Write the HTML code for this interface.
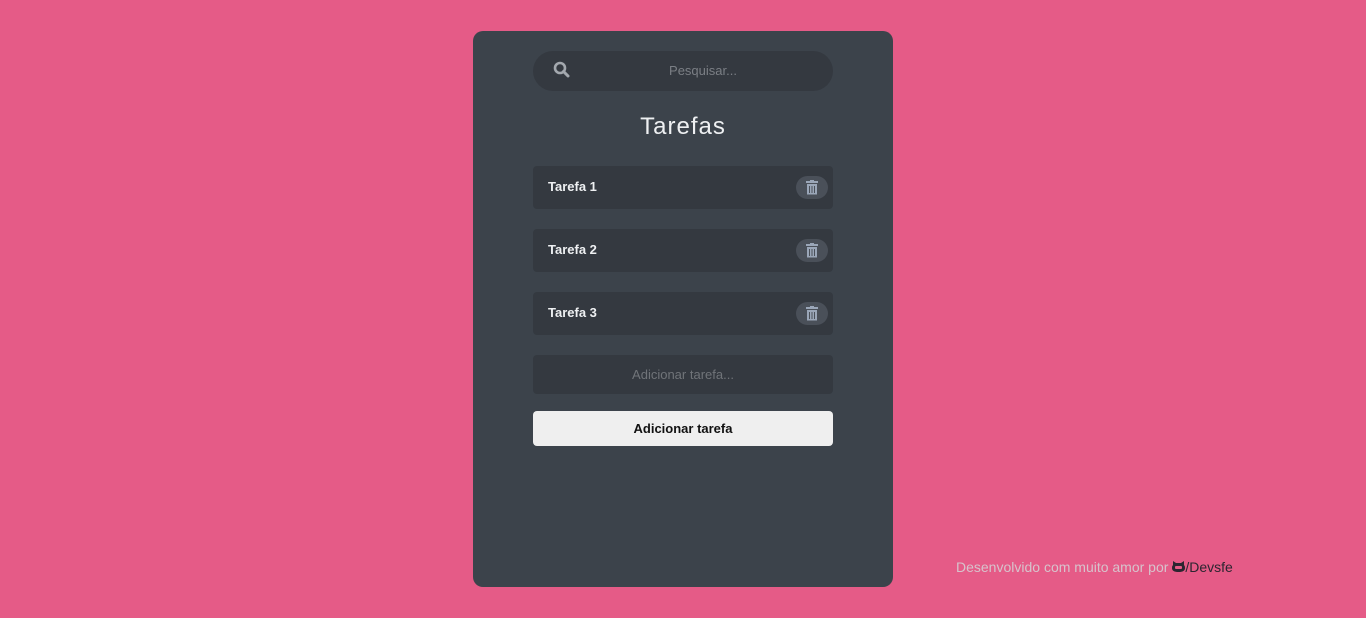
<!DOCTYPE html>
<html><head><style>
body{margin:0;width:1366px;height:618px;background:#e55b87;font-family:"Liberation Sans",sans-serif;position:relative;overflow:hidden}
.card{position:absolute;left:473px;top:31px;width:420px;height:556px;background:#3c434b;border-radius:10px}
.search{position:absolute;left:60px;top:20px;width:300px;height:40px;border-radius:20px;background:#343940}
.search span{position:absolute;left:0;right:0;top:12px;text-align:center;color:#7b7f85;font-size:13px;padding-left:40px}
.search svg{position:absolute;left:20px;top:10px}
h1{position:absolute;left:0;right:0;top:82px;margin:0;text-align:center;color:#eef0f2;font-weight:normal;font-size:24px;letter-spacing:1px}
.task{position:absolute;left:60px;width:300px;height:43px;background:#343940;border-radius:4px}
.task b{position:absolute;left:15px;top:13px;color:#eef0f2;font-size:13px}
.del{position:absolute;right:5px;top:10px;width:32px;height:23px;border-radius:12px;background:#4a5059}
.del svg{position:absolute;left:10px;top:4px}
.inp{position:absolute;left:60px;top:324px;width:300px;height:39px;background:#343940;border-radius:4px;color:#707479;font-size:13px;text-align:center;line-height:39px}
.btn{position:absolute;left:60px;top:380px;width:300px;height:35px;background:#efefef;border-radius:4px;color:#111;font-size:13px;font-weight:bold;text-align:center;line-height:35px}
.foot{position:absolute;left:956px;top:559px;font-size:14px;color:#d7c3cc}
.foot a{color:#2b2530}
</style></head><body>
<div class="card">
<div class="search"><svg width="17" height="17" viewBox="0 0 17 17"><circle cx="7" cy="7" r="5" fill="none" stroke="#a3a8ae" stroke-width="2.6"/><path d="M10.5 10.5L15 15" stroke="#a3a8ae" stroke-width="3" stroke-linecap="round"/></svg><span>Pesquisar...</span></div>
<h1>Tarefas</h1>
<div class="task" style="top:135px"><b>Tarefa 1</b><div class="del"><svg width="12" height="15" viewBox="0 0 12 15"><rect x="0" y="1" width="12" height="2" fill="#9aa6b8"/><rect x="4" y="0" width="4" height="2" fill="#9aa6b8"/><path d="M1 4h10v10.5H1z" fill="#9aa6b8"/><path d="M3.5 6v7M6 6v7M8.5 6v7" stroke="#4a5059" stroke-width="1"/></svg></div></div>
<div class="task" style="top:198px"><b>Tarefa 2</b><div class="del"><svg width="12" height="15" viewBox="0 0 12 15"><rect x="0" y="1" width="12" height="2" fill="#9aa6b8"/><rect x="4" y="0" width="4" height="2" fill="#9aa6b8"/><path d="M1 4h10v10.5H1z" fill="#9aa6b8"/><path d="M3.5 6v7M6 6v7M8.5 6v7" stroke="#4a5059" stroke-width="1"/></svg></div></div>
<div class="task" style="top:261px"><b>Tarefa 3</b><div class="del"><svg width="12" height="15" viewBox="0 0 12 15"><rect x="0" y="1" width="12" height="2" fill="#9aa6b8"/><rect x="4" y="0" width="4" height="2" fill="#9aa6b8"/><path d="M1 4h10v10.5H1z" fill="#9aa6b8"/><path d="M3.5 6v7M6 6v7M8.5 6v7" stroke="#4a5059" stroke-width="1"/></svg></div></div>
<div class="inp">Adicionar tarefa...</div>
<div class="btn">Adicionar tarefa</div>
</div>
<div class="foot">Desenvolvido com muito amor por <a><svg width="13" height="11" viewBox="0 0 13 11"><path d="M1 0l3 2h5l3-2v4q1 1 1 3 0 4-6.5 4T0 7q0-2 1-3z" fill="#2b2530"/><rect x="3" y="5" width="7" height="3" rx="1" fill="#e55b87"/></svg>/Devsfe</a></div>
</body></html>
